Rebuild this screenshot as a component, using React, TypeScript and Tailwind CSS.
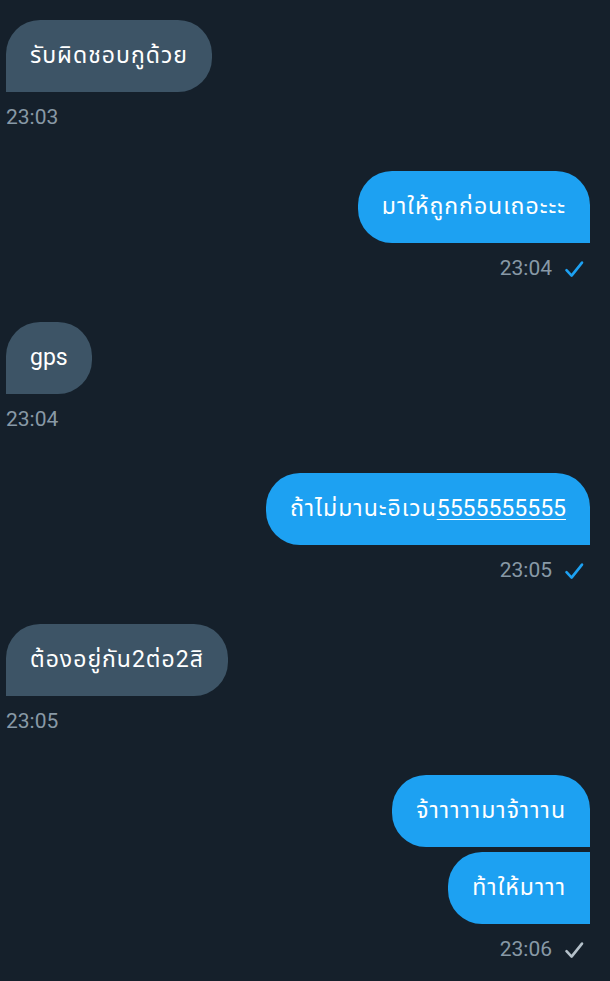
import React from "react";

type Msg = {
  id: number;
  side: "in" | "out";
  bubbles: React.ReactNode[];
  time: string;
  seen?: boolean;
};

const messages: Msg[] = [
  { id: 1, side: "in", bubbles: ["รับผิดชอบกูด้วย"], time: "23:03" },
  { id: 2, side: "out", bubbles: ["มาให้ถูกก่อนเถอะะะ"], time: "23:04", seen: true },
  { id: 3, side: "in", bubbles: [<span className="tracking-normal">gps</span>], time: "23:04" },
  {
    id: 4,
    side: "out",
    bubbles: [
      <>
        ถ้าไม่มานะอิเวน
        <span className="underline underline-offset-[3px] decoration-1 tracking-normal">5555555555</span>
      </>,
    ],
    time: "23:05",
    seen: true,
  },
  { id: 5, side: "in", bubbles: ["ต้องอยู่กัน2ต่อ2สิ"], time: "23:05" },
  { id: 6, side: "out", bubbles: ["จ้าาาาามาจ้าาาน", "ท้าให้มาาา"], time: "23:06", seen: false },
];

function Check({ blue }: { blue: boolean }) {
  return (
    <svg width="20" height="20" viewBox="0 0 20 20" className={blue ? "text-[#1da1f2]" : "text-[#b4c0c9]"}>
      <path d="M2.5 11.2 L7.6 16.6 L18 3.6" fill="none" stroke="currentColor" strokeWidth="2.6" strokeLinecap="round" strokeLinejoin="round" />
    </svg>
  );
}

export default function App() {
  return (
    <div
      className="w-[610px] h-[981px] overflow-hidden bg-[#15202b] pt-5 pl-[6px] pr-5 flex flex-col gap-[39px]"
      style={{ fontFamily: "Roboto, 'Noto Sans Thai', 'Noto Sans', 'DejaVu Sans', sans-serif" }}
    >
      {messages.map((m) => (
        <div key={m.id} className={m.side === "in" ? "flex flex-col items-start" : "flex flex-col items-end"}>
          <div className={m.side === "in" ? "flex flex-col items-start gap-[5px]" : "flex flex-col items-end gap-[5px]"}>
            {m.bubbles.map((b, i) => {
              const first = i === 0;
              const shape =
                m.side === "in"
                  ? "rounded-[34px] rounded-bl-none bg-[#3d5466]"
                  : first
                  ? "rounded-[34px] rounded-br-none bg-[#1da1f2]"
                  : "rounded-[34px] rounded-r-none bg-[#1da1f2]";
              return (
                <div
                  key={i}
                  className={`${shape} h-[72px] px-6 flex items-center text-white text-[23px] leading-7 tracking-[1px] whitespace-nowrap`}
                >
                  <span>{b}</span>
                </div>
              );
            })}
          </div>
          {m.side === "in" ? (
            <div className="mt-3 h-7 flex items-center text-[21px] text-[#8899a6]">{m.time}</div>
          ) : (
            <div className="mt-3 h-7 flex items-center gap-3 pr-[6px] text-[21px] text-[#8899a6]">
              <span>{m.time}</span>
              <Check blue={!!m.seen} />
            </div>
          )}
        </div>
      ))}
    </div>
  );
}
